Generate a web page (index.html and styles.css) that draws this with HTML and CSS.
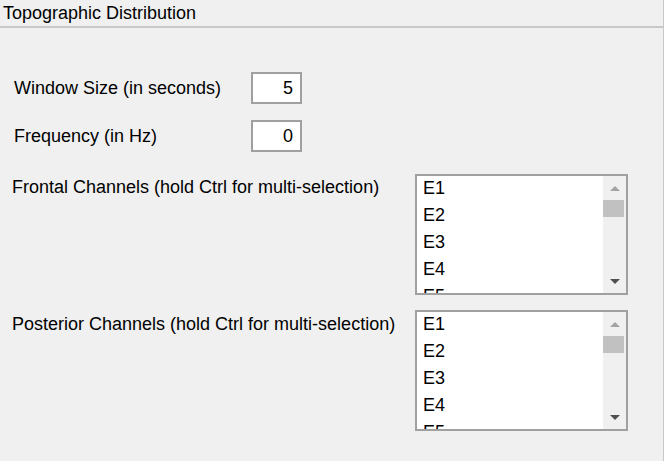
FILE: index.html
```html
<!DOCTYPE html>
<html>
<head>
<meta charset="utf-8">
<link rel="stylesheet" href="styles.css">
</head>
<body>
<div class="panel">
  <div class="header">Topographic Distribution</div>
  <div class="content">
    <div class="row row-input row-first">
      <div class="label label-short">Window Size (in seconds)</div>
      <div class="numbox">5</div>
    </div>
    <div class="row row-input row-second">
      <div class="label label-short">Frequency (in Hz)</div>
      <div class="numbox">0</div>
    </div>
    <div class="row row-list row-third">
      <div class="label label-long label-frontal">Frontal Channels (hold Ctrl for multi-selection)</div>
      <div class="listbox">
        <div class="items">
          <div class="item">E1</div>
          <div class="item">E2</div>
          <div class="item">E3</div>
          <div class="item">E4</div>
          <div class="item">E5</div>
        </div>
        <div class="scrollbar">
          <div class="sb-btn"><span class="arrow-up"></span></div>
          <div class="thumb"></div>
          <div class="sb-track"></div>
          <div class="sb-btn"><span class="arrow-down"></span></div>
        </div>
      </div>
    </div>
    <div class="row row-list row-fourth">
      <div class="label label-long label-posterior">Posterior Channels (hold Ctrl for multi-selection)</div>
      <div class="listbox">
        <div class="items">
          <div class="item">E1</div>
          <div class="item">E2</div>
          <div class="item">E3</div>
          <div class="item">E4</div>
          <div class="item">E5</div>
        </div>
        <div class="scrollbar">
          <div class="sb-btn"><span class="arrow-up"></span></div>
          <div class="thumb"></div>
          <div class="sb-track"></div>
          <div class="sb-btn"><span class="arrow-down"></span></div>
        </div>
      </div>
    </div>
  </div>
</div>
</body>
</html>
```
FILE: styles.css
```css
html, body {
  margin: 0;
  padding: 0;
  background: #f0f0f0;
}
body {
  font-family: "Liberation Sans", Arial, sans-serif;
  font-size: 18px;
  color: #000;
}
.panel {
  width: 663px;
  height: 461px;
  border-right: 1px solid #c8c8c8;
  box-sizing: content-box;
  overflow: hidden;
}
.header {
  height: 26px;
  line-height: 26px;
  padding-left: 3px;
  border-bottom: 2px solid #c8c8c8;
  box-sizing: content-box;
}
.content {
  display: flex;
  flex-direction: column;
}
.row {
  display: flex;
}
.row-input {
  align-items: center;
  padding-left: 14px;
}
.row-list {
  align-items: flex-start;
  padding-left: 12px;
}
.row-first { margin-top: 44px; }
.row-second { margin-top: 16px; }
.row-third { margin-top: 22px; }
.row-fourth { margin-top: 15px; }
.label {
  line-height: 20px;
  white-space: nowrap;
}
.label-short { width: 237px; }
.label-long { width: 403px; }
.label-frontal { padding-top: 3px; }
.label-posterior { padding-top: 4px; }
.numbox {
  width: 51px;
  height: 32px;
  box-sizing: border-box;
  border: 2px solid #a0a0a0;
  background: #fff;
  text-align: right;
  padding-right: 7px;
  line-height: 28px;
}
.listbox {
  width: 213px;
  height: 121px;
  box-sizing: border-box;
  border: 2px solid #a0a0a0;
  background: #fff;
  display: flex;
}
.items {
  flex: 1;
  overflow: hidden;
  padding-top: 2px;
  padding-left: 6px;
}
.item {
  height: 27px;
  line-height: 20px;
}
.scrollbar {
  width: 23px;
  background: #f0f0f0;
  display: flex;
  flex-direction: column;
}
.sb-btn {
  height: 24px;
  display: flex;
  align-items: center;
  justify-content: center;
  padding-left: 1px;
}
.thumb {
  height: 17px;
  background: #c1c1c1;
  margin-right: 2px;
}
.sb-track { flex: 1; }
.arrow-up {
  width: 0;
  height: 0;
  border-left: 5px solid transparent;
  border-right: 5px solid transparent;
  border-bottom: 5px solid #a3a3a3;
}
.arrow-down {
  width: 0;
  height: 0;
  border-left: 5px solid transparent;
  border-right: 5px solid transparent;
  border-top: 5px solid #505050;
}
```
